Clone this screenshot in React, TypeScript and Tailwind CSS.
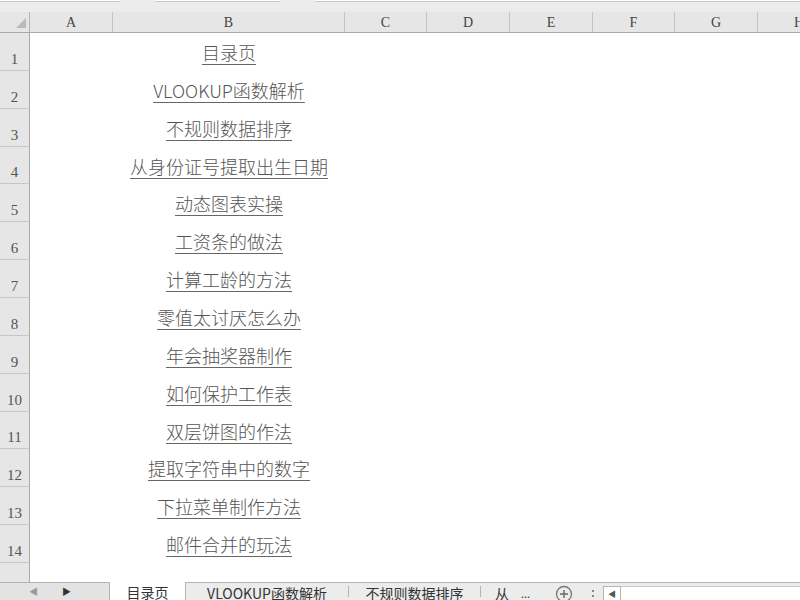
import { Fragment } from "react";

const cols = [
  { name: "A", w: "w-[83px]" },
  { name: "B", w: "w-[232px]" },
  { name: "C", w: "w-[82px]" },
  { name: "D", w: "w-[83px]" },
  { name: "E", w: "w-[83px]" },
  { name: "F", w: "w-[82px]" },
  { name: "G", w: "w-[83px]" },
];

const items = [
  "目录页",
  "VLOOKUP函数解析",
  "不规则数据排序",
  "从身份证号提取出生日期",
  "动态图表实操",
  "工资条的做法",
  "计算工龄的方法",
  "零值太讨厌怎么办",
  "年会抽奖器制作",
  "如何保护工作表",
  "双层饼图的作法",
  "提取字符串中的数字",
  "下拉菜单制作方法",
  "邮件合并的玩法",
];

const serif = "font-['Liberation_Serif','Noto_Serif_CJK_SC',serif]";
const cjk = "font-['Noto_Sans_CJK_SC','Noto_Sans',sans-serif]";

export default function App() {
  return (
    <div className="w-[800px] h-[600px] overflow-hidden bg-white flex flex-col">
      {/* formula bar remnants */}
      <div className="h-[12px] bg-[#ececec] flex gap-[35px] items-start">
        <div className="w-[120px] h-[2px] border-b border-[#c8c8c8] bg-white" />
        <div className="w-[125px] h-[2px] border-b border-[#c8c8c8] bg-white" />
        <div className="flex-1 h-[2px] border-b border-[#c8c8c8] bg-white" />
      </div>

      {/* column headers */}
      <div className="h-[21px] flex bg-[#e6e6e6] border-b border-[#a9a9a9] shrink-0">
        <div className="w-[30px] shrink-0 border-r border-[#b5b5b5] flex items-end justify-end pr-[3px] pb-[4px]">
          <div className="w-0 h-0 border-l-[10px] border-l-transparent border-b-[10px] border-b-[#b9b9b9]" />
        </div>
        {cols.map((c) => (
          <div
            key={c.name}
            className={`${c.w} shrink-0 border-r border-[#c3c3c3] flex items-center justify-center text-[14px] text-[#444] ${serif}`}
          >
            {c.name}
          </div>
        ))}
        <div className={`flex-1 flex items-center pl-[36px] text-[14px] text-[#444] ${serif}`}>H</div>
      </div>

      {/* sheet body */}
      <div className="flex-1 flex flex-col">
        {items.map((t, i) => (
          <Fragment key={t}>
            <div className="h-[37.86px] flex shrink-0">
              <div
                className={`w-[30px] shrink-0 bg-[#e6e6e6] border-r border-[#a9a9a9] border-b border-b-[#c6c6c6] flex items-end justify-center pb-[3px] text-[15px] leading-none text-[#555] ${serif}`}
              >
                {i + 1}
              </div>
              <div className="w-[83px] shrink-0" />
              <div className="w-[232px] shrink-0 flex items-center justify-center">
                <span
                  className={`${cjk} font-light text-[18px] leading-none text-[#555] underline underline-offset-[4px] decoration-[1px] decoration-[#666]`}
                >
                  {t}
                </span>
              </div>
            </div>
          </Fragment>
        ))}
        <div className="flex-1 flex">
          <div className="w-[30px] bg-[#e6e6e6] border-r border-[#a9a9a9]" />
        </div>
      </div>

      {/* sheet tabs */}
      <div className={`h-[18px] shrink-0 flex items-stretch bg-[#ececec] border-t border-[#b4b4b4] text-[14px] text-[#333] ${cjk}`}>
        <div className="w-[110px] shrink-0 bg-[#e3e3e3] border-r border-[#b4b4b4] flex items-center text-[9px] text-[#999]">
          <span className="ml-[29px]">◀</span>
          <span className="ml-[24px] text-[#333]">▶</span>
        </div>
        <div className="w-[75px] shrink-0 bg-white flex items-center justify-center pt-[2px] leading-none -mt-px">
          目录页
        </div>
        <div className="w-[163px] shrink-0 border-l border-[#b4b4b4] flex items-center justify-center pt-[2px] leading-none">
          VLOOKUP函数解析
        </div>
        <div className="w-px my-[3px] bg-[#b4b4b4]" />
        <div className="w-[131px] shrink-0 flex items-center justify-center pt-[2px] leading-none">
          不规则数据排序
        </div>
        <div className="w-px my-[3px] bg-[#b4b4b4]" />
        <div className="w-[40px] shrink-0 flex items-center pl-[14px] pt-[2px] leading-none">从</div>
        <div className="w-[24px] shrink-0 flex items-end pb-[1px] text-[11px] leading-none">...</div>
        <div className="w-[38px] shrink-0 flex items-center justify-center">
          <svg width="18" height="18" viewBox="0 0 18 18" className="mt-[4px]">
            <circle cx="9" cy="9" r="7.5" fill="none" stroke="#777" strokeWidth="1.3" />
            <path d="M9 5v8M5 9h8" stroke="#666" strokeWidth="1.4" />
          </svg>
        </div>
        <div className="w-[20px] shrink-0 flex flex-col items-center justify-center gap-[3px] pt-[3px]">
          <div className="w-[2px] h-[2px] bg-[#888]" />
          <div className="w-[2px] h-[2px] bg-[#888]" />
        </div>
        <div className="flex-1 flex items-stretch pt-[3px]">
          <div className="w-[18px] bg-white border border-[#b4b4b4] border-b-0 flex items-center justify-center text-[8px] text-[#555]">
            ◀
          </div>
          <div className="flex-1 bg-white border-t border-[#c8c8c8]" />
        </div>
      </div>
    </div>
  );
}
